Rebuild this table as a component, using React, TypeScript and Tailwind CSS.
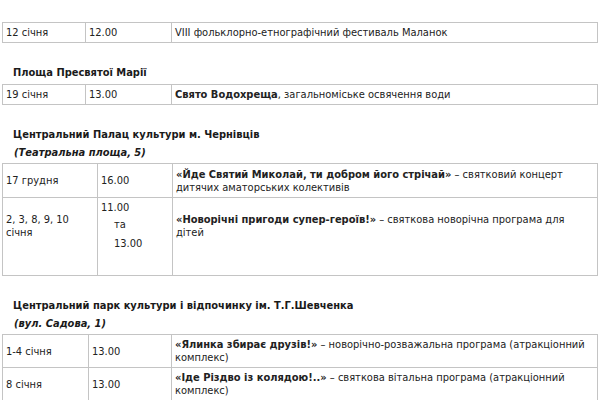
import React from 'react';

const cell = 'border border-[#c4c4c4] px-[3px] align-middle';

function Heading({ children }: { children: React.ReactNode }) {
  return <p className="pl-[11px] font-bold text-[#1a1a1a] leading-[18px]">{children}</p>;
}

function Address({ children }: { children: React.ReactNode }) {
  return <p className="pl-[12px] font-bold italic text-[#1a1a1a] leading-[18px]">{children}</p>;
}

export default function App() {
  return (
    <div
      className="w-[600px] h-[400px] overflow-hidden bg-white text-[11px] text-[#222] leading-[13px]"
      style={{ fontFamily: '"DejaVu Sans Condensed", "DejaVu Sans", Verdana, sans-serif', fontStretch: 'condensed' }}
    >
      <div className="pt-[22px] pl-[2px] pr-[3px]">
        {/* Маланка */}
        <table className="w-[596px] table-fixed border-collapse">
          <colgroup>
            <col className="w-[83px]" />
            <col className="w-[86px]" />
            <col />
          </colgroup>
          <tbody>
            <tr className="h-[20px]">
              <td className={cell}>12 січня</td>
              <td className={cell}>12.00</td>
              <td className={cell}>VIII фольклорно-етнографічний фестиваль Маланок</td>
            </tr>
          </tbody>
        </table>

        <div className="mt-[21px] mb-[2px]">
          <Heading>Площа Пресвятої Марії</Heading>
        </div>
        <table className="w-[596px] table-fixed border-collapse">
          <colgroup>
            <col className="w-[83px]" />
            <col className="w-[86px]" />
            <col />
          </colgroup>
          <tbody>
            <tr className="h-[20px]">
              <td className={cell}>19 січня</td>
              <td className={cell}>13.00</td>
              <td className={cell}>
                <b>Свято Водохреща</b>, загальноміське освячення води
              </td>
            </tr>
          </tbody>
        </table>

        {/* Палац культури */}
        <div className="mt-[21px] mb-[1px]">
          <Heading>Центральний Палац культури м. Чернівців</Heading>
          <Address>(Театральна площа, 5)</Address>
        </div>
        <table className="w-[596px] table-fixed border-collapse">
          <colgroup>
            <col className="w-[95px]" />
            <col className="w-[75px]" />
            <col />
          </colgroup>
          <tbody>
            <tr className="h-[34px]">
              <td className={cell}>17 грудня</td>
              <td className={cell}>16.00</td>
              <td className={`${cell} whitespace-nowrap`}>
                <b>«Йде Святий Миколай, ти добром його стрічай»</b> – святковий концерт
                <br />
                дитячих аматорських колективів
              </td>
            </tr>
            <tr className="h-[78px]">
              <td className={`${cell} align-top pt-[15px]`}>
                2, 3, 8, 9, 10
                <br />
                січня
              </td>
              <td className={`${cell} align-top pt-[3px]`}>
                <p>11.00</p>
                <p className="pl-[13px] mt-[4px]">та</p>
                <p className="pl-[13px] mt-[6px]">13.00</p>
              </td>
              <td className={`${cell} align-top pt-[15px] whitespace-nowrap`}>
                <b>«Новорічні пригоди супер-героїв!»</b> – святкова новорічна програма для
                <br />
                дітей
              </td>
            </tr>
          </tbody>
        </table>

        {/* Парк культури */}
        <div className="mt-[21px] mb-[1px]">
          <Heading>Центральний парк культури і відпочинку ім. Т.Г.Шевченка</Heading>
          <Address>(вул. Садова, 1)</Address>
        </div>
        <table className="w-[596px] table-fixed border-collapse">
          <colgroup>
            <col className="w-[86px]" />
            <col className="w-[83px]" />
            <col />
          </colgroup>
          <tbody>
            <tr className="h-[33px]">
              <td className={cell}>1-4 січня</td>
              <td className={cell}>13.00</td>
              <td className={`${cell} whitespace-nowrap`}>
                <b>«Ялинка збирає друзів!»</b> – новорічно-розважальна програма (атракціонний
                <br />
                комплекс)
              </td>
            </tr>
            <tr className="h-[33px]">
              <td className={cell}>8 січня</td>
              <td className={cell}>13.00</td>
              <td className={`${cell} whitespace-nowrap`}>
                <b>«Іде Різдво із колядою!..»</b> – святкова вітальна програма (атракціонний
                <br />
                комплекс)
              </td>
            </tr>
          </tbody>
        </table>
      </div>
    </div>
  );
}
